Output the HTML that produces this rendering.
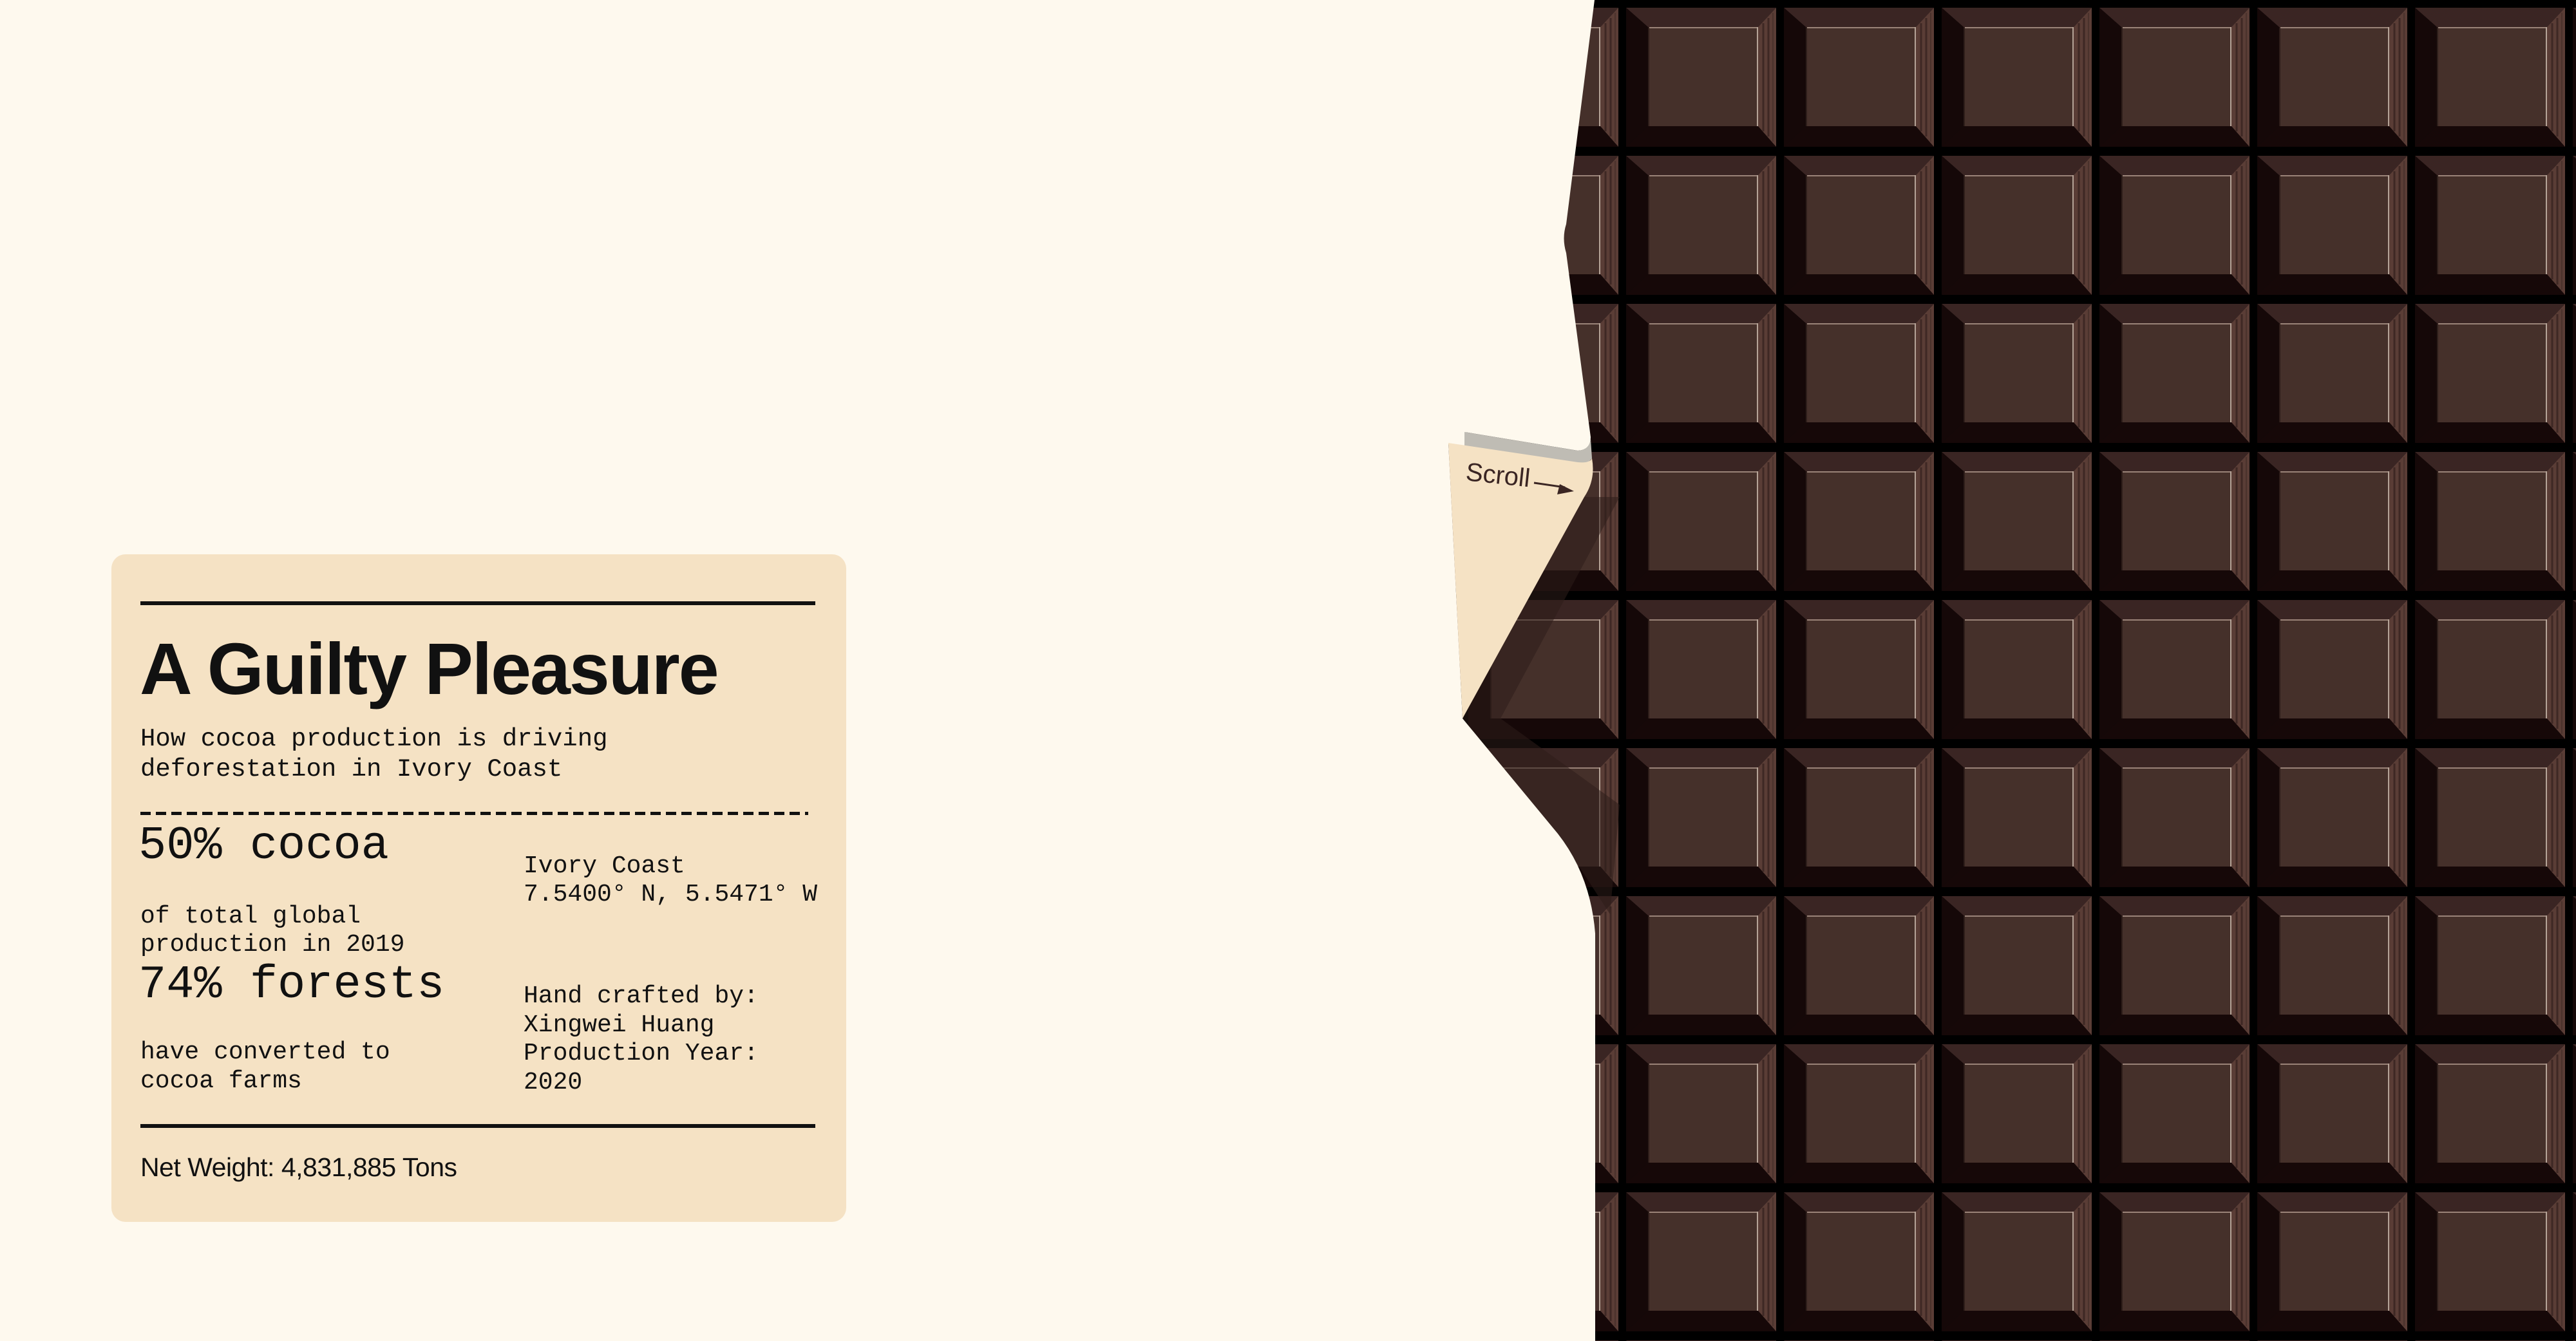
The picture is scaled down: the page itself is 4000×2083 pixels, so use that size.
<!DOCTYPE html>
<html><head><meta charset="utf-8"><style>
html,body{margin:0;padding:0;}
body{width:4000px;height:2083px;background:#fef9ee;position:relative;overflow:hidden;font-family:"Liberation Sans",sans-serif;color:#111;}
svg.bg{position:absolute;left:0;top:0;}
.card{position:absolute;left:173px;top:861px;width:1141px;height:1037px;background:#f5e2c4;border-radius:22px;}
.rule{position:absolute;left:45px;width:1048px;height:6px;background:#111;}
.dash{position:absolute;left:45px;width:1037px;height:5px;background:repeating-linear-gradient(90deg,#111 0 16px,transparent 16px 24px);}
.t{position:absolute;white-space:nowrap;line-height:1;}
.mono{font-family:"Liberation Mono",monospace;}
</style></head><body>
<svg class="bg" width="4000" height="2083" viewBox="0 0 4000 2083">
<defs>
<pattern id="choc" patternUnits="userSpaceOnUse" x="2525" y="12" width="245" height="230">
<rect width="245" height="230" fill="#000"/>
<polygon points="0,0 233,0 205,30 34,30" fill="#3a2523"/>
<polygon points="0,0 34,30 34,184 0,216" fill="#150808"/>
<polygon points="0,216 34,184 205,184 233,216" fill="#160808"/>
<polygon points="233,0 205,30 205,184 233,216" fill="#5a3d36"/>
<line x1="213" y1="24" x2="213" y2="192" stroke="#3e2824" stroke-width="3"/>
<line x1="221" y1="16" x2="221" y2="200" stroke="#3e2824" stroke-width="3"/>
<line x1="228" y1="8" x2="228" y2="208" stroke="#4a322c" stroke-width="2"/>
<rect x="34" y="30" width="171" height="154" fill="#45302a"/>
<line x1="34" y1="31" x2="204" y2="31" stroke="#9a8378" stroke-width="2"/>
<line x1="204" y1="30" x2="204" y2="184" stroke="#b5a397" stroke-width="2"/>
<line x1="35" y1="30" x2="35" y2="184" stroke="#2e1e1a" stroke-width="2"/>
</pattern>
</defs>
<rect x="2200" y="0" width="1800" height="2083" fill="url(#choc)"/>
<polygon points="2271,1116 2460,772 2515,772 2330,1116 2515,1250 2500,1420 2419,1295" fill="rgba(45,30,26,0.55)"/>
<path d="M0,0 L2476,0 L2432,348 Q2425,370 2432,393 L2470,679 Q2470,699 2450,700 L2274,671 L2249,688 L2271,1116 L2419,1295 Q2470,1360 2477,1450 L2477,2083 L0,2083 Z" fill="#fef9ee"/>
<polygon points="2240,660 2276,660 2276,702 2249,690" fill="#fef9ee"/>
<path d="M2274,671 L2450,700 Q2468,699 2470,682 L2472,712 Q2462,724 2450,721 L2274,700 Z" fill="#bfbcb4"/>
<path d="M2249,688 L2450,718 Q2468,720 2472,712 Q2478,745 2460,772 L2271,1116 Z" fill="#f5e2c4"/>
<text x="2275" y="746" font-family="Liberation Sans, sans-serif" font-size="40" fill="#3a2523" transform="rotate(6 2275 746)">Scroll</text>
<line x1="2382" y1="750" x2="2430" y2="757" stroke="#3a2523" stroke-width="3"/>
<polygon points="2444,763 2418,768 2422,752" fill="#3a2523"/>
</svg>
<div class="card">
<div class="rule" style="top:73px"></div>
<div class="t" style="left:44px;top:122px;font-size:113px;font-weight:bold;letter-spacing:-2px;">A Guilty Pleasure</div>
<div class="t mono" style="left:45px;top:264px;font-size:39px;line-height:47px;">How cocoa production is driving<br>deforestation in Ivory Coast</div>
<div class="dash" style="top:400px"></div>
<div class="t mono" style="left:42px;top:417px;font-size:72px;">50% cocoa</div>
<div class="t mono" style="left:45px;top:541px;font-size:38px;line-height:44px;">of total global<br>production in 2019</div>
<div class="t mono" style="left:42px;top:633px;font-size:72px;">74% forests</div>
<div class="t mono" style="left:45px;top:751px;font-size:38px;line-height:45px;">have converted to<br>cocoa farms</div>
<div class="t mono" style="left:640px;top:463px;font-size:38px;line-height:44px;">Ivory Coast<br>7.5400° N, 5.5471° W</div>
<div class="t mono" style="left:640px;top:665px;font-size:38px;line-height:44.5px;">Hand crafted by:<br>Xingwei Huang<br>Production Year:<br>2020</div>
<div class="rule" style="top:885px"></div>
<div class="t" style="left:45px;top:932px;font-size:41px;letter-spacing:-0.5px;">Net Weight: 4,831,885 Tons</div>
</div>
</body></html>
